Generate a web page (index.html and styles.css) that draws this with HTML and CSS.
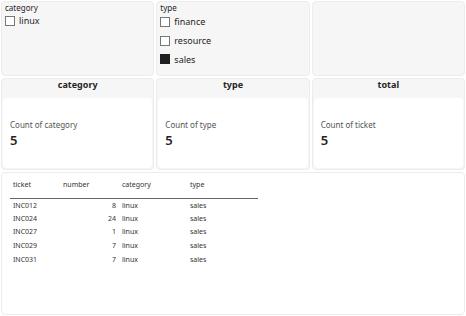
FILE: index.html
```html
<!DOCTYPE html>
<html>
	<head>
		<meta charset="UTF-8">
		<title>tickets</title>
		<link rel="stylesheet" href="styles.css">
	</head>
	<body>
		<div class="board">
			<div class="panel slicer">
				<div class="slicer-title">category</div>
				<ul>
					<li><span class="check"></span>linux</li>
				</ul>
			</div>
			<div class="panel slicer">
				<div class="slicer-title">type</div>
				<ul class="wide">
					<li><span class="check"></span>finance</li>
					<li><span class="check"></span>resource</li>
					<li><span class="check on"></span>sales</li>
				</ul>
			</div>
			<div class="panel"></div>

			<div class="panel kpi">
				<div class="kpi-head">category</div>
				<div class="kpi-card">
					<div class="kpi-label">Count of category</div>
					<div class="kpi-value">5</div>
				</div>
			</div>
			<div class="panel kpi">
				<div class="kpi-head">type</div>
				<div class="kpi-card">
					<div class="kpi-label">Count of type</div>
					<div class="kpi-value">5</div>
				</div>
			</div>
			<div class="panel kpi">
				<div class="kpi-head">total</div>
				<div class="kpi-card">
					<div class="kpi-label">Count of ticket</div>
					<div class="kpi-value">5</div>
				</div>
			</div>

			<div class="panel grid-panel">
				<table>
					<thead>
						<tr><th>ticket</th><th>number</th><th>category</th><th>type</th></tr>
					</thead>
					<tbody>
						<tr><td>INC012</td><td class="num">8</td><td>linux</td><td>sales</td></tr>
						<tr><td>INC024</td><td class="num">24</td><td>linux</td><td>sales</td></tr>
						<tr><td>INC027</td><td class="num">1</td><td>linux</td><td>sales</td></tr>
						<tr><td>INC029</td><td class="num">7</td><td>linux</td><td>sales</td></tr>
						<tr><td>INC031</td><td class="num">7</td><td>linux</td><td>sales</td></tr>
					</tbody>
				</table>
			</div>
		</div>
	</body>
</html>
```

FILE: styles.css
```css
*{
	margin: 0;
	padding: 0;
	box-sizing: border-box;
}
html, body{
	height: 100%;
}
body{
	font-family: "Noto Sans", "Open Sans", sans-serif;
	color: #252423;
	background: #fff;
}
ul{
	list-style: none;
}
.board{
	height: 100%;
	padding: 1px;
	display: grid;
	grid-template-columns: 1fr 1fr 1fr;
	grid-template-rows: 75px 92px 1fr;
	gap: 2px;
}
.panel{
	background: #f6f6f6;
	border: 1px solid #ececec;
	border-radius: 4px;
}
/* slicers */
.slicer{
	padding: 1px 3px;
}
.slicer-title{
	font-size: 8px;
	line-height: 10px;
}
.slicer li{
	display: flex;
	align-items: center;
	font-size: 9px;
	height: 13px;
	margin-top: 1px;
}
.slicer ul.wide li{
	height: 19.7px;
	margin-top: -1px;
}
.check{
	width: 10px;
	height: 10px;
	border: 1px solid #777;
	background: #fff;
	margin-right: 4px;
}
.check.on{
	background: #1f1f1f;
	border-color: #1f1f1f;
}
/* cards */
.kpi{
	display: flex;
	flex-direction: column;
}
.kpi-head{
	height: 19px;
	font-size: 9px;
	font-weight: bold;
	text-align: center;
	line-height: 12px;
}
.kpi-card{
	flex: 1;
	background: #fff;
	border-radius: 4px;
	margin: 0 1px 1px 1px;
	padding: 21px 7px 0;
}
.kpi-label{
	font-size: 8px;
	color: #555;
	line-height: 11px;
}
.kpi-value{
	font-size: 13px;
	font-weight: 600;
	line-height: 16px;
	margin-top: 2px;
}
/* table */
.grid-panel{
	grid-column: 1 / 4;
	background: #fff;
	padding: 4px 0 0 8px;
}
table{
	border-collapse: collapse;
	font-size: 7px;
	color: #333;
}
th{
	font-weight: normal;
	text-align: left;
	height: 21px;
	padding: 0 3px 5px;
	border-bottom: 1px solid #666;
}
td{
	height: 13.6px;
	padding: 0 3px;
}
th:nth-child(1){ width: 50px; }
th:nth-child(2){ width: 59px; }
th:nth-child(3){ width: 68px; }
th:nth-child(4){ width: 71px; }
td.num{
	text-align: right;
}
```
